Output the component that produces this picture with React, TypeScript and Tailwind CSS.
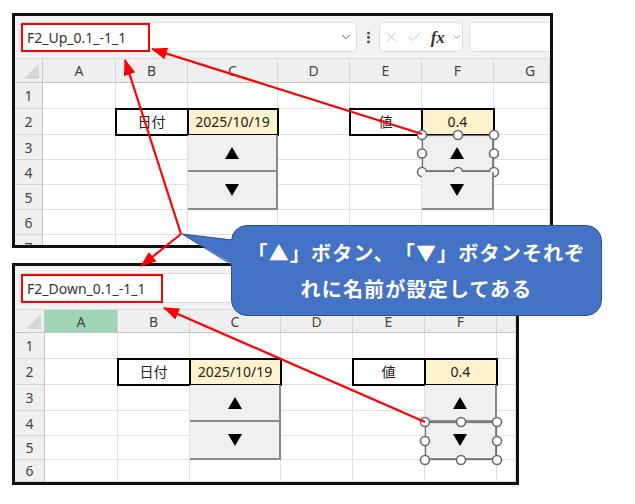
import React from "react";
import { ChevronDown, X, Check, EllipsisVertical } from "lucide-react";

const LETTERS = ["", "A", "B", "C", "D", "E", "F", "G"];

type Dir = "up" | "down";

interface SheetSpec {
  cols: number[]; // first entry is the row-number column
  rows: number[]; // first entry is the column-letter row
  gridCls: string;
  outerCls: string;
  formulaCls: string;
  name: string;
  redCls: string;
  greenA?: boolean;
  tools?: boolean;
  selected: Dir;
}

const start = (arr: number[], i: number) => arr.slice(0, i).reduce((a, b) => a + b, 0);

const CELLS: Record<string, { text: string; yellow?: boolean }> = {
  "2-2": { text: "日付" },
  "2-3": { text: "2025/10/19", yellow: true },
  "2-5": { text: "値" },
  "2-6": { text: "0.4", yellow: true },
};

const Tri = ({ dir }: { dir: Dir }) => (
  <svg width="14" height="12" viewBox="0 0 14 12">
    {dir === "up" ? <polygon points="7,0 14,12 0,12" fill="#000" /> : <polygon points="0,0 14,0 7,12" fill="#000" />}
  </svg>
);

const Handles = ({ w, h }: { w: number; h: number }) => {
  const pts = [
    [0, 0], [w / 2, 0], [w, 0],
    [0, h / 2], [w, h / 2],
    [0, h], [w / 2, h], [w, h],
  ];
  return (
    <svg className="absolute left-0 top-0 overflow-visible" width={w} height={h}>
      <rect x="0.5" y="0.5" width={w - 1} height={h - 1} fill="none" stroke="#6f6f6f" strokeWidth="1.2" />
      {pts.map(([x, y], i) => (
        <circle key={i} cx={x} cy={y} r="4.5" fill="#fff" stroke="#6b6b6b" strokeWidth="1.6" />
      ))}
    </svg>
  );
};

const SpinButton = ({ left, top, width, height, dir, selected }: { left: number; top: number; width: number; height: number; dir: Dir; selected: boolean }) => (
  <div className="absolute" style={{ left, top, width, height }}>
    <div className="w-full h-full flex items-center justify-center bg-[#f0f0f0] border-r-2 border-b-2 border-[#8a8a8a]">
      <Tri dir={dir} />
    </div>
    {selected && <Handles w={width} h={height} />}
  </div>
);

const FormulaBar = ({ spec }: { spec: SheetSpec }) => (
  <div className={`flex items-start pl-[4px] bg-[#f2f2f2] border-b border-[#dcdcdc] ${spec.formulaCls}`}>
    <div className="w-[338px] h-[30px] flex items-stretch bg-white rounded-[5px] border border-[#dcdcdc] shrink-0">
      <div className={`border-2 border-[#ff0000] flex items-center pl-[4px] text-[14px] text-[#333] font-['Noto_Sans',sans-serif] ${spec.redCls}`}>
        {spec.name}
      </div>
      {spec.tools && <ChevronDown className="ml-auto mr-[3px] self-center" size={14} strokeWidth={1.6} color="#555" />}
    </div>
    {spec.tools && (
      <>
        <div className="w-[22px] h-[30px] flex items-center justify-center shrink-0">
          <EllipsisVertical size={15} strokeWidth={2.6} color="#444" />
        </div>
        <div className="w-[84px] h-[30px] flex items-center pl-[3px] gap-[6px] bg-white rounded-[5px] border border-[#dcdcdc] shrink-0">
          <X size={18} strokeWidth={1.2} color="#b4b4b4" />
          <Check size={18} strokeWidth={1.2} color="#b4b4b4" />
          <span className="text-[17px] italic font-semibold text-[#333] font-['Liberation_Serif',serif] leading-none ml-[2px]">fx</span>
          <ChevronDown size={12} strokeWidth={1.5} color="#777" />
        </div>
        <div className="flex-1 h-[30px] ml-[6px] -mr-[10px] bg-white rounded-[5px] border border-[#dcdcdc]" />
      </>
    )}
  </div>
);

const Sheet = ({ spec }: { spec: SheetSpec }) => {
  const { cols, rows } = spec;
  const last = cols.length - 1;
  const boxTop = start(rows, 2) - 1;
  const btnTop = start(rows, 3);
  const upH = 37;
  const downH = start(rows, 6) - btnTop - upH;
  return (
    <div className={`border-[3px] border-[#111] bg-white overflow-hidden ${spec.outerCls}`}>
      <FormulaBar spec={spec} />
      <div className={`relative grid ${spec.gridCls} text-[14px] text-[#333] font-['Noto_Sans','Noto_Sans_CJK_JP',sans-serif]`}>
        {rows.map((_, r) =>
          cols.map((__, c) => {
            const key = `${r}-${c}`;
            if (r === 0 && c === 0)
              return (
                <div key={key} className="relative bg-[#efefef] border-r border-b border-[#c8c8c8]">
                  <div className="absolute right-[3px] bottom-[3px] w-[15px] h-[15px] bg-[#d6d6d6] [clip-path:polygon(100%_0,100%_100%,0_100%)]" />
                </div>
              );
            if (r === 0)
              return (
                <div
                  key={key}
                  className={`flex items-center overflow-hidden border-r border-b border-r-[#d4d4d4] border-b-[#c4c4c4] text-[#444] ${spec.greenA && c === 1 ? "bg-[#9fd5b5]" : "bg-[#efefef]"}`}
                >
                  <div className={`shrink-0 text-center ${c === last ? "w-[72px]" : "w-full"}`}>{LETTERS[c]}</div>
                </div>
              );
            if (c === 0)
              return (
                <div key={key} className="flex items-center justify-center bg-[#efefef] border-r border-b border-r-[#c4c4c4] border-b-[#d4d4d4] text-[#444]">
                  {r}
                </div>
              );
            const cell = CELLS[key];
            return (
              <div
                key={key}
                className={`flex items-center justify-center border-r border-b border-[#e0e0e0] text-[#222] ${cell?.yellow ? "bg-[#fff2cc]" : "bg-white"}`}
              >
                {cell?.text}
              </div>
            );
          })
        )}

        {[0, 3].map((off) => (
          <div
            key={off}
            className="absolute border-2 border-black"
            style={{ left: start(cols, 2 + off) - 1, top: boxTop, width: cols[2 + off] + cols[3 + off] + 2, height: rows[2] + 2 }}
          >
            <div className="absolute top-0 bottom-0 w-[2px] bg-black" style={{ left: cols[2 + off] - 2 }} />
          </div>
        ))}

        {[3, 6].map((c) => (
          <React.Fragment key={c}>
            <SpinButton left={start(cols, c)} top={btnTop} width={cols[c]} height={upH} dir="up" selected={c === 6 && spec.selected === "up"} />
            <SpinButton left={start(cols, c)} top={btnTop + upH} width={cols[c]} height={downH} dir="down" selected={c === 6 && spec.selected === "down"} />
          </React.Fragment>
        ))}
      </div>
    </div>
  );
};

const TOP: SheetSpec = {
  cols: [28, 73, 72, 90, 72, 72, 72, 56],
  rows: [24, 26, 26, 25, 25, 25, 25, 25],
  gridCls: "grid-cols-[28px_73px_72px_90px_72px_72px_72px_56px] grid-rows-[24px_26px_26px_25px_25px_25px_25px_25px]",
  outerCls: "w-[541px] h-[235px]",
  formulaCls: "h-[43px] pt-[6px]",
  name: "F2_Up_0.1_-1_1",
  redCls: "w-[129px] h-[29px] ml-[1px]",
  tools: true,
  selected: "up",
};

const BOTTOM: SheetSpec = {
  cols: [30, 73, 72, 91, 72, 72, 72, 19],
  rows: [23, 26, 26, 26, 25, 24, 22],
  gridCls: "grid-cols-[30px_73px_72px_91px_72px_72px_72px_19px] grid-rows-[23px_26px_26px_26px_25px_24px_22px]",
  outerCls: "w-[507px] h-[222px]",
  formulaCls: "h-[44px] pt-[7px]",
  name: "F2_Down_0.1_-1_1",
  redCls: "w-[142px] h-[29px] ml-[1px]",
  greenA: true,
  selected: "down",
};

export default function App() {
  return (
    <div className="relative w-[635px] h-[504px] bg-white overflow-hidden">
      <div className="flex flex-col gap-[15px] pt-[13px] pl-[12px]">
        <Sheet spec={TOP} />
        <Sheet spec={BOTTOM} />
      </div>

      {/* red arrows */}
      <svg className="absolute left-0 top-0 pointer-events-none" width="635" height="504">
        <defs>
          <marker id="ah" markerUnits="userSpaceOnUse" markerWidth="16" markerHeight="12" refX="15" refY="6" orient="auto">
            <path d="M0,0 L16,6 L0,12 z" fill="#ff0000" />
          </marker>
        </defs>
        <g stroke="#ff0000" strokeWidth="2.2" markerEnd="url(#ah)">
          <line x1="181" y1="234" x2="125" y2="60" />
          <line x1="181" y1="234" x2="141" y2="266" />
          <line x1="422" y1="134" x2="152" y2="49" />
          <line x1="425" y1="422" x2="164" y2="308" />
        </g>
      </svg>

      {/* callout */}
      <div className="absolute left-[231px] top-[225px] w-[371px] h-[91px] rounded-[16px] bg-[#4472c4] border border-[#2f528f] flex flex-col items-center justify-center text-white font-bold text-[20px] leading-[36px] tracking-[1.2px] [text-spacing-trim:space-all] font-['Noto_Sans_CJK_JP',sans-serif]">
        <div>「▲」ボタン、「▼」ボタンそれぞ</div>
        <div>れに名前が設定してある</div>
      </div>
      <svg className="absolute left-0 top-0 pointer-events-none" width="635" height="504">
        <polygon points="182,234 234,240 234,265" fill="#4472c4" />
        <polyline points="232,240 182,234 232,265" fill="none" stroke="#2f528f" strokeWidth="1" />
      </svg>
    </div>
  );
}
